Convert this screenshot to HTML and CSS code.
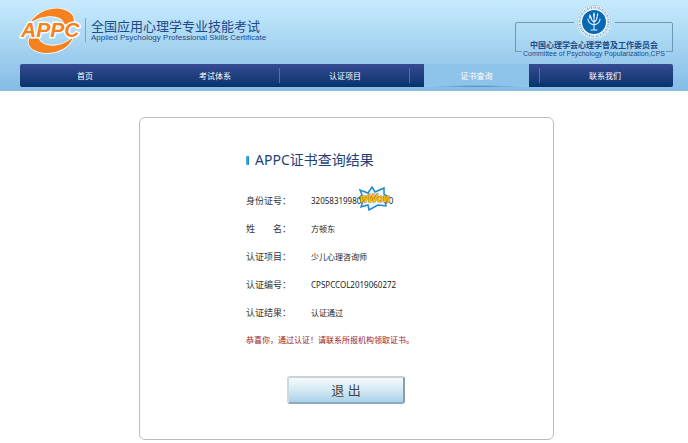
FILE: index.html
```
<!DOCTYPE html>
<html lang="zh-CN">
<head>
<meta charset="utf-8">
<title>APPC证书查询结果</title>
<link rel="stylesheet" href="styles.css">
</head>
<body>
<header class="header">
  <div class="brand-row">
    <a class="brand" href="#">
      <svg class="logo" viewBox="0 0 62 50" aria-hidden="true">
        <g fill="#f5821f" stroke="#fff" stroke-width="1.6" paint-order="stroke">
          <path d="M10 17C17 6 30 1 41 3C52 5 57 12 52 20L44 18C43 9 25 7 10 17Z"/>
          <path d="M10 31C5 40 14 47 27 47C39 47 50 41 53 31C41 43 21 42 18 31Z"/>
        </g>
        <text class="logo-text" x="1" y="31">APPC</text>
      </svg>
      <span class="brand-name">
        <span class="brand-cn">全国应用心理学专业技能考试</span>
        <span class="brand-en">Applied Psychology Professional Skills Certificate</span>
      </span>
    </a>
    <div class="committee">
      <svg class="frame" viewBox="0 0 158 30" aria-hidden="true">
        <path d="M59 .5H2Q.5 .5 .5 2V29.5H7M100 .5H156Q157.500 .5 157.500 2V29.5H151" fill="none" stroke="#6f98b3"/>
      </svg>
      <svg class="seal" viewBox="0 0 36 36" aria-hidden="true">
        <circle cx="18" cy="18" r="17.500" fill="#f3faff"/>
        <circle cx="18" cy="18" r="16.800" fill="none" stroke="#5a9bcb" stroke-width=".5"/>
        <circle cx="18" cy="18" r="14.500" fill="none" stroke="#7fb0d4" stroke-width="2.200" stroke-dasharray="1.400 .9 .7 .8"/>
        <circle cx="18" cy="18" r="12" fill="#0868b4"/>
        <g fill="none" stroke="#dff2ff" stroke-width="1.100" stroke-linecap="round">
          <path d="M18 26V13M12 15C12 18 14 20 18 21C22 20 24 18 24 15M15 13C15 15 16 17 18 18C20 17 21 15 21 13M15 26H21"/>
        </g>
        <path d="M18 8Q20 11 18 14Q16 11 18 8ZM22 8Q23 11 21 14Q20 11 22 8ZM14 10Q16 13 14 15Q12 13 14 10Z" fill="#dff2ff"/>
      </svg>
      <span class="committee-cn">中国心理学会心理学普及工作委员会</span>
      <span class="committee-en">Committee of Psychology Popularization,CPS</span>
    </div>
  </div>
  <nav class="nav">
    <a href="#">首页</a>
    <a class="divided" href="#">考试体系</a>
    <a class="divided" href="#">认证项目</a>
    <a class="divided active" href="#" aria-current="page"><span>证书查询</span></a>
    <a href="#">联系我们</a>
  </nav>
</header>
<main class="content">
  <section class="card">
    <h1>APPC证书查询结果</h1>
    <dl class="result">
      <dt>身份证号：</dt>
      <dd><span class="masked">320583199801010010
        <svg class="sticker" viewBox="0 0 32 25" aria-hidden="true">
          <path d="M14 1L17 6L26 2V8L31 12L27 15L28 20L20 19L11 24L10 19L3 21L5 15L1 12L4 9L2 4L10 7Z" fill="#e8f7ff" stroke="#2388c4" stroke-width="1.500"/>
          <text class="sticker-text" x="2" y="16">wWow</text>
        </svg></span></dd>
      <dt>姓　　名：</dt><dd>方顿东</dd>
      <dt>认证项目：</dt><dd>少儿心理咨询师</dd>
      <dt>认证编号：</dt><dd>CPSPCCOL2019060272</dd>
      <dt>认证结果：</dt><dd>认证通过</dd>
    </dl>
    <p class="note">恭喜你，通过认证！请联系所报机构领取证书。</p>
    <button class="exit" type="button">退 出</button>
  </section>
</main>
</body>
</html>
```
FILE: styles.css
```
* { box-sizing: border-box; }

body {
  margin: 0;
  background: #fff;
  color: #333;
  font-family: "Noto Sans", "Noto Sans CJK SC", sans-serif;
  font-size: 8px;
}

a { color: inherit; text-decoration: none; }

.header {
  padding: 0 15px 4px 20px;
  background: linear-gradient(#c7ebfd, #84bce5);
}

.brand-row {
  display: flex;
  justify-content: space-between;
  height: 64px;
}

.brand {
  display: flex;
  align-items: flex-start;
  gap: 3px;
  padding-top: 6px;
}

.logo { width: 62px; height: 50px; overflow: visible; }

.logo-text {
  font: italic bold 21px "Liberation Sans", sans-serif;
  fill: #f5821f;
  stroke: #fff;
  stroke-width: 3px;
  stroke-linejoin: round;
  paint-order: stroke;
}

.brand-name {
  display: flex;
  flex-direction: column;
  margin-top: 12px;
  padding-left: 5px;
  border-left: 1px solid #7fa5c4;
  color: #1d4b88;
}

.brand-cn { font-size: 13px; line-height: 16px; }

.brand-en {
  font-family: "Liberation Sans", sans-serif;
  font-size: 8px;
  line-height: 8px;
}

.committee {
  position: relative;
  display: flex;
  flex-direction: column;
  align-items: center;
  width: 158px;
  padding-top: 4px;
  color: #1d4b88;
}

.frame { position: absolute; top: 22px; left: 0; width: 158px; height: 30px; }

.seal { width: 36px; height: 36px; }

.committee-cn { font-size: 8px; font-weight: bold; line-height: 10px; }

.committee-en {
  font-family: "Liberation Sans", sans-serif;
  font-size: 7px;
  line-height: 8px;
  white-space: nowrap;
}

.nav {
  display: grid;
  grid-template-columns: repeat(5, 1fr);
  padding-right: 3px;
  border-radius: 2px;
  background: linear-gradient(#374c93, #08326b);
  color: #fff;
  line-height: 23px;
  text-align: center;
}

.nav a { position: relative; }

.divided::after {
  content: "";
  position: absolute;
  top: 4px;
  right: 0;
  width: 1px;
  height: 15px;
  background: #566ea5;
}

.divided:has(+ .active)::after { height: 15px; }

.active span {
  display: block;
  margin: 0 11px 0 14px;
  background: radial-gradient(ellipse at bottom, #4c83b4, transparent 70%) bottom / 90% 2px no-repeat, #8ec4e9;
}

.content { padding: 26px 15px 3px 20px; }

.card {
  width: 415px;
  max-width: 100%;
  margin: 0 auto;
  padding: 32px 20px 35px 106px;
  border: 1px solid #bbb;
  border-radius: 6px;
}

h1 {
  display: flex;
  align-items: center;
  gap: 6px;
  margin: 0 0 17px;
  color: #1d4279;
  font-size: 14px;
  font-weight: normal;
  line-height: 20px;
}

h1::before {
  content: "";
  width: 3px;
  height: 9px;
  border-radius: 1px;
  background: linear-gradient(90deg, #55bde8, #087fbd);
}

.result {
  display: grid;
  grid-template-columns: 65px 1fr;
  margin: 0;
  line-height: 28px;
}

.result dt { font-size: 9px; }

.result dd { margin: 0; color: #222; }

.masked { position: relative; display: inline-block; }

.sticker {
  position: absolute;
  top: -1px;
  left: 47px;
  width: 32px;
  height: 25px;
}

.sticker-text {
  font: italic bold 10px "Liberation Sans", sans-serif;
  fill: #ffc70a;
  stroke: #a8700c;
  stroke-width: 1px;
  paint-order: stroke;
}

.note { margin: 0; color: #a02020; line-height: 25px; }

.exit {
  display: block;
  width: 118px;
  height: 28px;
  margin: 24px 0 0 41px;
  padding: 0;
  border: 2px solid;
  border-color: #c8d2d8 #8c9ca8 #8eabbd #cbdae2;
  border-radius: 3px;
  background: linear-gradient(#f5fafc, #d5e9f3 50%, #a8d1e9);
  color: #444;
  font-family: inherit;
  font-size: 13px;
  line-height: 22px;
}
```
